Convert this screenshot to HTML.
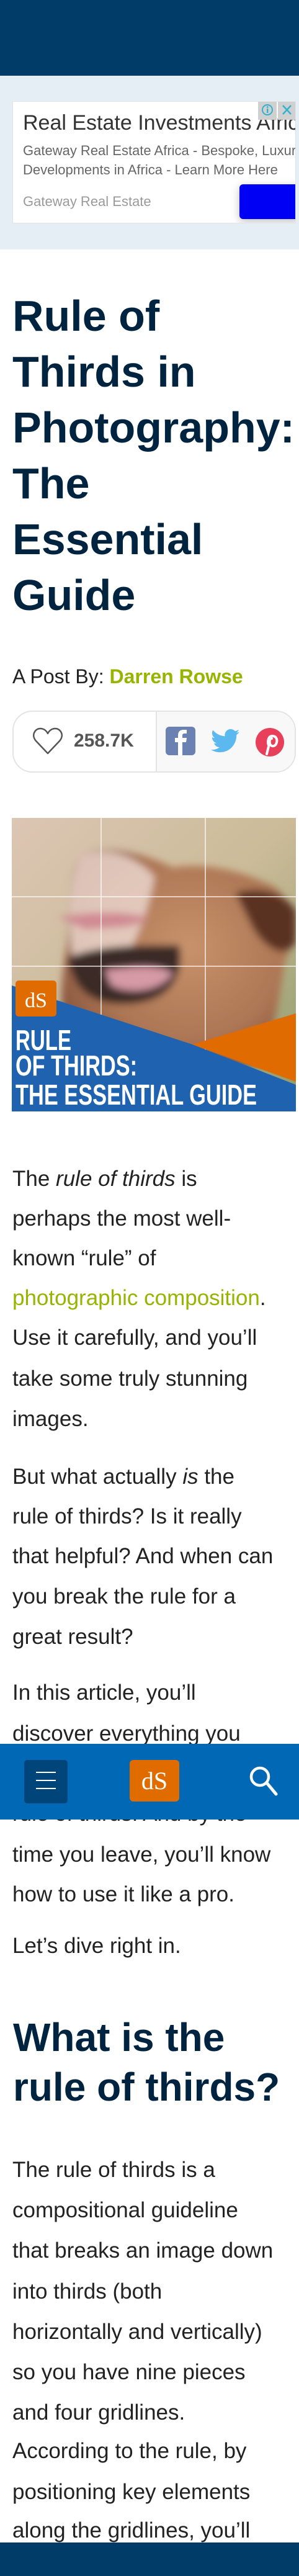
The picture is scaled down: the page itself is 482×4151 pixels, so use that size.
<!DOCTYPE html>
<html><head><meta charset="utf-8">
<style>
*{margin:0;padding:0;box-sizing:border-box}
body{width:482px;height:4151px;position:relative;overflow:hidden;background:#fff;font-family:"Liberation Sans",sans-serif}
.a{position:absolute;white-space:nowrap}
.t{position:absolute;left:20px;font-size:70px;font-weight:bold;color:#00243f;line-height:90px;white-space:nowrap}
.p{position:absolute;left:20px;font-size:35px;color:#222;line-height:64px;white-space:nowrap}
.h2{position:absolute;left:21px;font-size:64px;font-weight:bold;color:#00243f;line-height:80px;white-space:nowrap}
.g{color:#96b400}
</style></head><body>
<div class="a" style="left:0;top:0;width:482px;height:122px;background:#013b68"></div>
<div class="a" style="left:0;top:122px;width:482px;height:280px;background:#e6eef5"></div>
<div class="a" style="left:20px;top:163px;width:457px;height:197px;background:#fff;border:1px solid #e0e4e8;overflow:hidden">
  <div class="a" style="left:16px;top:15px;font-size:34px;color:#333">Real Estate Investments Africa</div>
  <div class="a" style="left:16px;top:63px;font-size:22px;color:#666;line-height:31px">Gateway Real Estate Africa - Bespoke, Luxury<br>Developments in Africa - Learn More Here</div>
  <div class="a" style="left:16px;top:148px;font-size:22px;color:#9a9a9a">Gateway Real Estate</div>
  <div class="a" style="left:365px;top:133px;width:100px;height:56px;background:#0000f5;border-radius:6px;box-shadow:0 4px 14px rgba(0,0,0,.25)"></div>
  <div class="a" style="left:395px;top:0;width:30px;height:29px;background:#d0d0d0"></div>
  <div class="a" style="left:427px;top:0;width:30px;height:29px;background:#d0d0d0"></div>
  <svg class="a" style="left:395px;top:0" width="62" height="29"><circle cx="15" cy="13" r="8" fill="none" stroke="#2fb2d0" stroke-width="2"/><rect x="14" y="11" width="2.4" height="7" fill="#2fb2d0"/><circle cx="15.2" cy="8.5" r="1.4" fill="#2fb2d0"/><path d="M40 6 L53 20 M53 6 L40 20" stroke="#2fb2d0" stroke-width="2.4"/></svg>
</div>

<div class="t" style="top:464px">Rule of</div>
<div class="t" style="top:554px">Thirds in</div>
<div class="t" style="top:644px">Photography:</div>
<div class="t" style="top:734px">The</div>
<div class="t" style="top:824px">Essential</div>
<div class="t" style="top:914px">Guide</div>

<div class="a" style="left:20px;top:1066px;font-size:32px;color:#222;line-height:48px">A Post By: <b class="g">Darren Rowse</b></div>

<div class="a" style="left:20px;top:1145px;width:457px;height:100px;border:2px solid #e4e4e4;border-radius:32px;overflow:hidden;background:#fff">
  <div class="a" style="left:229px;top:0;width:230px;height:100px;background:#f8f8f8;border-left:2px solid #e4e4e4"></div>
</div>
<svg class="a" style="left:52px;top:1172px" width="50" height="46"><path d="M25 42 L6 22 C-2 13 4 2 13 2 C19 2 23 6 25 10 C27 6 31 2 37 2 C46 2 52 13 44 22 Z" fill="none" stroke="#555" stroke-width="2.5" stroke-linejoin="round"/></svg>
<div class="a" style="left:119px;top:1176px;font-size:30px;font-weight:bold;color:#555;line-height:36px">258.7K</div>
<svg class="a" style="left:267px;top:1171px" width="48" height="46"><rect width="48" height="46" rx="6" fill="#6b81b2"/><path d="M27 46 V25 H33 L34 18 H27 V14 C27 12 28 11 30 11 H34 V5 H29 C23 5 20 8 20 14 V18 H15 V25 H20 V46 Z" fill="#fff"/></svg>
<svg class="a" style="left:340px;top:1174px" width="46" height="40" viewBox="0 0 24 20"><path d="M24 2.4c-.9.4-1.8.6-2.8.8 1-.6 1.8-1.6 2.2-2.7-1 .6-2 1-3.1 1.2C19.3.6 18 0 16.6 0c-2.7 0-4.9 2.2-4.9 4.9 0 .4 0 .8.1 1.1C7.7 5.800 4.1 3.9 1.7.9c-.4.7-.7 1.6-.7 2.5 0 1.7.9 3.2 2.2 4.1-.8 0-1.6-.2-2.2-.6v.1c0 2.4 1.7 4.4 3.9 4.8-.4.1-.8.2-1.3.2-.3 0-.6 0-.9-.1.6 2 2.4 3.4 4.6 3.4-1.700 1.3-3.8 2.1-6.1 2.1-.4 0-.8 0-1.2-.1 2.2 1.4 4.8 2.2 7.5 2.2 9.1 0 14-7.5 14-14v-.6c1-.7 1.8-1.6 2.5-2.5z" fill="#5bb9f0"/></svg>
<svg class="a" style="left:411px;top:1172px" width="48" height="48"><circle cx="24" cy="24" r="23" fill="#e8405b"/><path d="M19 43 L23 27 M22 29 C20 24 21 14 28 14 C35 14 37 21 34 27 C31 32 25 31 24 26 M24 26 C23 22 24 18 27 18" fill="none" stroke="#fff" stroke-width="4" stroke-linecap="round"/></svg>

<svg class="a" style="left:19px;top:1318px" width="458" height="473">
<defs>
<linearGradient id="bg" x1="0" y1="0" x2="1" y2="1"><stop offset="0" stop-color="#dcc6b4"/><stop offset=".5" stop-color="#cbbb98"/><stop offset="1" stop-color="#8c9a6a"/></linearGradient>
<radialGradient id="dog" cx=".55" cy=".45" r=".6"><stop offset="0" stop-color="#c8926c"/><stop offset=".7" stop-color="#ad7654"/><stop offset="1" stop-color="#8a5840"/></radialGradient>
<filter id="bl"><feGaussianBlur stdDeviation="6"/></filter>
</defs>
<rect width="458" height="473" fill="url(#bg)"/>
<g filter="url(#bl)">
<path d="M110 60 C150 40 220 60 260 80 C320 70 380 90 420 110 C458 130 458 200 440 230 C430 300 420 360 400 400 L100 400 C70 330 80 260 90 200 C95 150 90 90 110 60 Z" fill="url(#dog)"/>
<path d="M110 60 C150 45 200 60 230 95 C220 150 200 200 180 230 L100 240 C90 180 90 100 110 60 Z" fill="#ead5cb" opacity=".85"/>
<path d="M75 160 C130 150 180 150 220 160 C200 180 160 175 120 180 Z" fill="#d08a93"/>
<path d="M90 225 C140 205 200 205 270 205 C280 260 250 300 180 300 C130 300 100 280 90 225 Z" fill="#3a2a28"/>
<path d="M150 245 C200 240 230 235 260 250 C240 280 190 285 160 270 Z" fill="#d59aa5"/>
<path d="M360 120 C400 110 440 120 458 150 L458 200 C440 230 410 210 390 180 Z" fill="#5a3020"/>
</g>
<g stroke="#fff" stroke-width="1.5" opacity=".85"><line x1="144" y1="0" x2="144" y2="473"/><line x1="312" y1="0" x2="312" y2="473"/><line x1="0" y1="127" x2="458" y2="127"/><line x1="0" y1="239" x2="458" y2="239"/></g>
<path d="M0 270 L291 365 L458 430 L458 473 L0 473 Z" fill="#1f63b0"/>
<path d="M291 365 L458 315 L458 425 Z" fill="#e06b00"/>
<rect x="6" y="262" width="66" height="58" rx="5" fill="#e06b00"/>
<text x="39" y="305" font-family="Liberation Serif,serif" font-size="34" fill="#fff" text-anchor="middle">dS</text>
<g font-family="Liberation Sans,sans-serif" font-weight="bold" font-size="46" fill="#fff">
<text x="6" y="374" textLength="90" lengthAdjust="spacingAndGlyphs">RULE</text>
<text x="6" y="415" textLength="196" lengthAdjust="spacingAndGlyphs">OF THIRDS:</text>
<text x="6" y="462" textLength="389" lengthAdjust="spacingAndGlyphs">THE ESSENTIAL GUIDE</text>
</g>
</svg>

<div class="p" style="top:1868px">The <i>rule of thirds</i> is</div>
<div class="p" style="top:1932px">perhaps the most well-</div>
<div class="p" style="top:1996px">known “rule” of</div>
<div class="p" style="top:2060px"><span class="g">photographic composition</span>.</div>
<div class="p" style="top:2124px">Use it carefully, and you’ll</div>
<div class="p" style="top:2190px">take some truly stunning</div>
<div class="p" style="top:2255px">images.</div>

<div class="p" style="top:2348px">But what actually <i>is</i> the</div>
<div class="p" style="top:2412px">rule of thirds? Is it really</div>
<div class="p" style="top:2476px">that helpful? And when can</div>
<div class="p" style="top:2541px">you break the rule for a</div>
<div class="p" style="top:2606px">great result?</div>

<div class="p" style="top:2696px">In this article, you’ll</div>
<div class="p" style="top:2762px">discover everything you</div>
<div class="p" style="top:2826px">need to know about the</div>
<div class="p" style="top:2891px">rule of thirds. And by the</div>
<div class="p" style="top:2957px">time you leave, you’ll know</div>
<div class="p" style="top:3021px">how to use it like a pro.</div>

<div class="p" style="top:3104px">Let’s dive right in.</div>

<div class="h2" style="top:3243px">What is the</div>
<div class="h2" style="top:3323px">rule of thirds?</div>

<div class="p" style="top:3465px">The rule of thirds is a</div>
<div class="p" style="top:3530px">compositional guideline</div>
<div class="p" style="top:3595px">that breaks an image down</div>
<div class="p" style="top:3661px">into thirds (both</div>
<div class="p" style="top:3726px">horizontally and vertically)</div>
<div class="p" style="top:3791px">so you have nine pieces</div>
<div class="p" style="top:3856px">and four gridlines.</div>
<div class="p" style="top:3918px">According to the rule, by</div>
<div class="p" style="top:3984px">positioning key elements</div>
<div class="p" style="top:4046px">along the gridlines, you’ll</div>

<div class="a" style="left:0;top:4097px;width:482px;height:54px;background:#013b68"></div>

<div class="a" style="left:0;top:2810px;width:482px;height:122px;background:#0068b5"></div>
<div class="a" style="left:39px;top:2836px;width:70px;height:70px;background:#00457a;border-radius:5px"></div>
<div class="a" style="left:58px;top:2855px;width:32px;height:2px;background:#fff"></div>
<div class="a" style="left:58px;top:2868px;width:32px;height:2px;background:#fff"></div>
<div class="a" style="left:58px;top:2881px;width:32px;height:2px;background:#fff"></div>
<div class="a" style="left:209px;top:2836px;width:80px;height:67px;background:#e06c00;border-radius:6px;color:#fff;font-family:'Liberation Serif',serif;font-size:40px;text-align:center;line-height:67px">dS</div>
<svg class="a" style="left:392px;top:2845px" width="60" height="55"><circle cx="27" cy="18" r="14" fill="none" stroke="#fff" stroke-width="4.5"/><path d="M38 28 L53 46" stroke="#fff" stroke-width="5" stroke-linecap="round"/></svg>
</body></html>
